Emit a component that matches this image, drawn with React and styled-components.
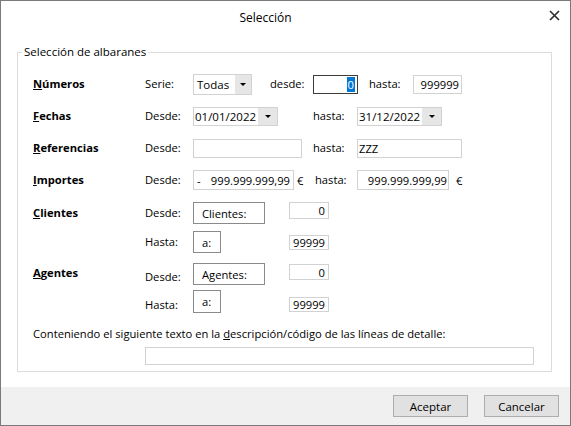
import React from 'react';
import styled, { createGlobalStyle } from 'styled-components';

const Global = createGlobalStyle`
  html, body { margin: 0; padding: 0; background: #fff; }
  body { font-family: "Open Sans", "Noto Sans", sans-serif; font-size: 11.2px; color: #000; }
`;

const Window = styled.div`
  box-sizing: border-box;
  width: 571px;
  height: 426px;
  border: 1px solid #7a7a7a;
  display: flex;
  flex-direction: column;
  background: #fff;
`;

const TitleBar = styled.div`
  height: 32px;
  display: flex;
  align-items: center;
  position: relative;
  .title {
    flex: 1;
    text-align: center;
    padding-right: 40px;
    font-size: 12px;
  }
  .close {
    position: absolute;
    right: 10px;
    top: 8px;
  }
`;

const Body = styled.div`
  flex: 1;
  padding: 11px 18px 0 16px;
`;

const Group = styled.fieldset`
  margin: 0;
  padding: 0;
  border: 1px solid #dcdcdc;
  legend {
    margin-left: 4px;
    padding: 0 2px;
    line-height: 16px;
    font-size: 11.5px;
  }
`;

const GroupInner = styled.div`
  padding: 8px 0 6px 15px;
`;

const Row = styled.div`
  display: flex;
  align-items: ${p => p.$align || 'center'};
  height: ${p => p.$h}px;
`;

const Label = styled.div`
  width: 112px;
  flex: none;
  font-weight: 700;
  margin-top: ${p => p.$top || 0}px;
  line-height: 16px;
`;

const Sub = styled.div`
  width: ${p => p.$w || 48}px;
  flex: none;
  margin-left: ${p => p.$ml || 0}px;
  margin-top: ${p => p.$top || 0}px;
  line-height: 16px;
`;

const Field = styled.div`
  box-sizing: border-box;
  flex: none;
  width: ${p => p.$w}px;
  height: ${p => p.$h || 19}px;
  margin-left: ${p => p.$ml || 0}px;
  margin-top: ${p => p.$top || 0}px;
  border: 1px solid ${p => (p.$focus ? '#3c3c3c' : p.$btn ? '#8a8a8a' : '#d2d2d2')};
  background: #fff;
  display: flex;
  align-items: center;
  justify-content: ${p => (p.$right ? 'flex-end' : 'flex-start')};
  padding: 0 ${p => p.$pr ?? 2}px 0 ${p => p.$pl ?? 2}px;
  white-space: nowrap;
  font-size: ${p => p.$fs || 11.2}px;
  .sel {
    background: #0078d7;
    color: #fff;
    height: 15px;
    line-height: 15px;
    padding: 0 1px;
  }
  .minus {
    margin-right: auto;
  }
`;

const Combo = styled.div`
  box-sizing: border-box;
  flex: none;
  width: ${p => p.$w}px;
  height: ${p => p.$h || 19}px;
  border: 1px solid #d2d2d2;
  display: flex;
  background: #fff;
  .value {
    flex: 1;
    display: flex;
    align-items: center;
    padding-left: ${p => p.$pl ?? 2}px;
    font-size: ${p => p.$fs || 11.2}px;
  }
  .arrow {
    width: ${p => p.$aw || 16}px;
    background: #e6e6e6;
    display: flex;
    align-items: center;
    justify-content: center;
  }
  .arrow::after {
    content: '';
    border-left: 3px solid transparent;
    border-right: 3px solid transparent;
    border-top: 3px solid #000;
  }
`;

const Euro = styled.div`
  flex: none;
  width: ${p => p.$w}px;
  padding-left: ${p => p.$pl ?? 3}px;
  box-sizing: border-box;
`;

const Note = styled.div`
  margin-top: 8px;
  line-height: 16px;
  u { text-decoration: underline; }
`;

const LongInput = styled.div`
  box-sizing: border-box;
  margin: 5px 0 0 112px;
  width: 389px;
  height: 18px;
  border: 1px solid #d2d2d2;
`;

const Footer = styled.div`
  height: 38px;
  background: #f0f0f0;
  display: flex;
  justify-content: flex-end;
  align-items: flex-start;
  gap: 16px;
  padding: 8px 11px 0 0;
  box-sizing: border-box;
`;

const Button = styled.button`
  width: 75px;
  height: 22px;
  border: 1px solid #adadad;
  background: #e1e1e1;
  font-family: inherit;
  font-size: 11.5px;
  color: #000;
  padding: 0;
`;

const CloseIcon = () => (
  <svg width="11" height="11" viewBox="0 0 11 11">
    <path d="M1 1 L10 10 M10 1 L1 10" stroke="#2b2b2b" strokeWidth="1.6" />
  </svg>
);

export default function App() {
  return (
    <>
      <Global />
      <Window>
        <TitleBar>
          <div className="title">Selección</div>
          <div className="close"><CloseIcon /></div>
        </TitleBar>
        <Body>
          <Group>
            <legend>Selección de albaranes</legend>
            <GroupInner>
              <Row $h={32}>
                <Label><u>N</u>úmeros</Label>
                <Sub>Serie:</Sub>
                <Combo $w={59} $h={21} $pl={3} $fs={11.5}>
                  <div className="value">Todas</div>
                  <div className="arrow" />
                </Combo>
                <Sub $w={43} $ml={18}>desde:</Sub>
                <Field $w={45} $focus $right $pr={2}><span className="sel">0</span></Field>
                <Sub $w={44} $ml={11}>hasta:</Sub>
                <Field $w={49} $right>999999</Field>
              </Row>

              <Row $h={32}>
                <Label><u>F</u>echas</Label>
                <Sub>Desde:</Sub>
                <Combo $w={85} $aw={19} $pl={1} $fs={11.5}>
                  <div className="value">01/01/2022</div>
                  <div className="arrow" />
                </Combo>
                <Sub $w={44} $ml={35}>hasta:</Sub>
                <Combo $w={85} $aw={19} $pl={1} $fs={11.5}>
                  <div className="value">31/12/2022</div>
                  <div className="arrow" />
                </Combo>
              </Row>

              <Row $h={32}>
                <Label><u>R</u>eferencias</Label>
                <Sub>Desde:</Sub>
                <Field $w={109} />
                <Sub $w={44} $ml={11}>hasta:</Sub>
                <Field $w={105} $pl={1}>ZZZ</Field>
              </Row>

              <Row $h={32}>
                <Label><u>I</u>mportes</Label>
                <Sub>Desde:</Sub>
                <Field $w={101} $h={20} $right $pl={3} $pr={3}>
                  <span className="minus">-</span>999.999.999,99
                </Field>
                <Euro $w={21}>€</Euro>
                <Sub $w={42}>hasta:</Sub>
                <Field $w={92} $h={20} $right $pr={1}>999.999.999,99</Field>
                <Euro $w={20} $pl={7}>€</Euro>
              </Row>

              <Row $h={32} $align="flex-start">
                <Label $top={9}><u>C</u>lientes</Label>
                <Sub $top={9}>Desde:</Sub>
                <Field $w={72} $h={22} $top={6} $btn $pl={8}>Clientes:</Field>
                <Field $w={40} $h={17} $top={6} $ml={24} $right $pr={3}>0</Field>
              </Row>

              <Row $h={28} $align="flex-start">
                <Label />
                <Sub $top={6}>Hasta:</Sub>
                <Field $w={28} $h={22} $top={3} $btn $pl={8}>a:</Field>
                <Field $w={40} $h={15} $top={7} $ml={68} $right $pr={3}>99999</Field>
              </Row>

              <Row $h={36} $align="flex-start">
                <Label $top={9}><u>A</u>gentes</Label>
                <Sub $top={13}>Desde:</Sub>
                <Field $w={72} $h={22} $top={7} $btn $pl={8}>Agentes:</Field>
                <Field $w={40} $h={16} $top={8} $ml={24} $right $pr={3}>0</Field>
              </Row>

              <Row $h={26} $align="flex-start">
                <Label />
                <Sub $top={5}>Hasta:</Sub>
                <Field $w={28} $h={23} $top={-2} $btn $pl={8}>a:</Field>
                <Field $w={40} $h={15} $top={5} $ml={68} $right $pr={3}>99999</Field>
              </Row>

              <Note>Conteniendo el siguiente texto en la <u>d</u>escripción/código de las líneas de detalle:</Note>
              <LongInput />
            </GroupInner>
          </Group>
        </Body>
        <Footer>
          <Button>Aceptar</Button>
          <Button>Cancelar</Button>
        </Footer>
      </Window>
    </>
  );
}
